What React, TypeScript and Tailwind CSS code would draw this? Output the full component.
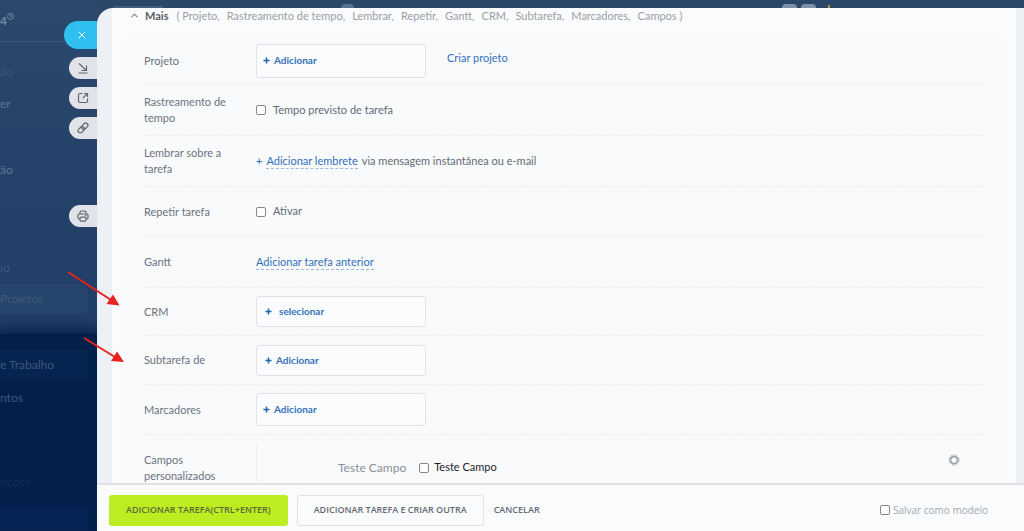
import React from "react";
import { ChevronUp, X } from "lucide-react";

const sections = [
  "( Projeto,",
  "Rastreamento de tempo,",
  "Lembrar,",
  "Repetir,",
  "Gantt,",
  "CRM,",
  "Subtarefa,",
  "Marcadores,",
  "Campos )",
];

function Row({
  label,
  className,
  children,
}: {
  label: string;
  className: string;
  children: React.ReactNode;
}) {
  return (
    <div className={"flex items-center border-b border-dashed border-[#eaecef] " + className}>
      <div className="w-28 shrink-0 pr-4 leading-4 text-[#6c737f]">{label}</div>
      <div className="flex min-w-0 flex-1 items-center">{children}</div>
    </div>
  );
}

function Plus() {
  return (
    <svg viewBox="0 0 8 8" className="size-[7px] shrink-0" aria-hidden="true">
      <path d="M4 0.5V7.5M0.5 4H7.5" stroke="#2067b0" strokeWidth="1.8" />
    </svg>
  );
}

function AddBox({ text, className }: { text: string; className: string }) {
  return (
    <button
      className={
        "flex w-[170px] items-center rounded-[3px] border border-[#dfe2e7] bg-[#fbfcfe] text-[10px] font-bold text-[#3473b9] " +
        className
      }
    >
      <Plus />
      {text}
    </button>
  );
}

function CheckBox({ id, label, className }: { id: string; label: string; className: string }) {
  return (
    <label htmlFor={id} className={"flex items-center " + className}>
      <input
        id={id}
        type="checkbox"
        className="size-[10px] shrink-0 appearance-none rounded-[2px] border border-[#85878b] bg-white"
      />
      {label}
    </label>
  );
}

function Sidebar() {
  return (
    <aside className="relative w-[97px] shrink-0 bg-linear-to-b from-[#2b496d] from-0% via-[#203e67] via-60% to-[#1d3a63] to-100%">
      <div className="flex h-full flex-col overflow-hidden text-[12px]">
        <div className="flex h-[42px] shrink-0 items-center border-b border-[#35597a]">
          <span className="text-[12px] font-bold text-[#7489a3]">4</span>
          <svg viewBox="0 0 10 10" className="mb-2 size-[7px]" fill="none" stroke="#8496ad" aria-hidden="true">
            <circle cx="5" cy="5" r="4.2" strokeWidth="1.2" />
            <path d="M5 2.5V5H7" strokeWidth="1.2" />
          </svg>
        </div>
        <ul className="shrink-0 pt-[14px] text-[#5f7490]">
          <li className="h-8 leading-8 text-[#3b5675]">ão</li>
          <li className="h-8 leading-8">er</li>
          <li className="mt-[34px] h-8 leading-8">ão</li>
        </ul>
        <ul className="shrink-0 pt-[66px] text-[#405a7b]">
          <li className="h-8 leading-8">io</li>
          <li className="mr-[9px] h-[30px] rounded-r-lg bg-[#26456c] leading-[30px]">Projetos</li>
        </ul>
        <div className="mt-5 flex-1 bg-[#02204a] shadow-[0_0_12px_4px_#02204a]">
          <ul className="pt-4 text-[#40567a]">
            <li className="mr-[9px] h-[30px] rounded-br-lg bg-[#05244f] leading-[30px]">e Trabalho</li>
            <li className="mt-0.5 h-8 leading-8">ntos</li>
            <li className="mt-[52px] h-8 leading-8 text-[#152f58]">nções</li>
          </ul>
          <div className="mr-[9px] mt-2 h-6 rounded-tr-lg bg-[#052354]"></div>
        </div>
      </div>

      <div className="absolute right-0 top-[21px] flex flex-col items-end gap-2 text-[#60656e]">
        <button aria-label="Fechar" className="flex h-7 w-[33px] items-center rounded-l-full bg-[#2fc0f0] pl-3 text-white">
          <X size={12} strokeWidth={2} />
        </button>
        <button aria-label="Recolher" className="flex h-[22px] w-7 items-center rounded-l-full bg-[#e1e3e8] pl-2">
          <svg viewBox="0 0 12 12" className="size-3" fill="none" stroke="currentColor" strokeWidth="1.2" aria-hidden="true">
            <path d="M2 1.5L9.5 8.5M9.5 3.5V8.5H4.5M1.5 11H10.5" />
          </svg>
        </button>
        <button aria-label="Abrir em nova janela" className="flex h-[22px] w-7 items-center rounded-l-full bg-[#e1e3e8] pl-2">
          <svg viewBox="0 0 12 12" className="size-3" fill="none" stroke="currentColor" strokeWidth="1.2" aria-hidden="true">
            <path d="M5.5 1.5H3Q1.5 1.5 1.5 3V9Q1.5 10.5 3 10.5H9Q10.5 10.5 10.5 9V6.5M7 1.5H10.5V5M10.5 1.5L5.8 6.2" />
          </svg>
        </button>
        <button aria-label="Copiar link" className="flex h-[22px] w-7 items-center rounded-l-full bg-[#e1e3e8] pl-2">
          <svg viewBox="0 0 12 12" className="size-3" fill="none" stroke="currentColor" strokeWidth="1.2" aria-hidden="true">
            <g transform="rotate(-45 6 6)">
              <rect x="0" y="3.8" width="7" height="4.4" rx="2.2" />
              <rect x="5" y="3.8" width="7" height="4.4" rx="2.2" />
            </g>
          </svg>
        </button>
        <button aria-label="Imprimir" className="mt-[58px] flex h-[22px] w-7 items-center rounded-l-full bg-[#e1e3e8] pl-2">
          <svg viewBox="0 0 12 12" className="size-3" fill="none" stroke="currentColor" strokeWidth="1.2" aria-hidden="true">
            <path d="M3 4V2.2Q3 1 4.2 1H7.8Q9 1 9 2.2V4" />
            <path d="M3 9H2.2Q1 9 1 7.8V5.2Q1 4 2.2 4H9.8Q11 4 11 5.2V7.8Q11 9 9.8 9H9" />
            <rect x="3" y="7.2" width="6" height="4" rx="1.2" />
            <path d="M8 5.7H9.4" />
          </svg>
        </button>
      </div>
    </aside>
  );
}

function TopBar() {
  return (
    <div className="flex h-2 shrink-0 items-end overflow-hidden bg-[#2b4769]">
      <div className="ml-4 h-0.5 w-[50px] rounded-t-full bg-[#47607f]"></div>
      <div className="ml-[178px] h-1 w-[13px] rounded-t-sm bg-[#5a7190]"></div>
      <div className="ml-auto mr-[194px] flex items-end gap-1">
        <div className="h-1 w-[15px] rounded-t-full bg-[#8190aa]"></div>
        <div className="h-1 w-[15px] rounded-t-full bg-[#8190aa]"></div>
        <div className="ml-2 h-[3px] w-0.5 bg-[#a89a4a]"></div>
      </div>
    </div>
  );
}

function App() {
  return (
    <div className="relative flex h-screen overflow-hidden bg-[#2b4769] font-[Lato,'Open_Sans',sans-serif] text-[11px] text-[#646a75]">
      <Sidebar />

      <main className="flex min-w-0 flex-1 flex-col">
        <TopBar />
        <div className="min-h-0 flex-1 overflow-hidden rounded-tl-2xl bg-[#edf1f5] pl-[15px] pr-2">
          <div className="h-full bg-[#fafbfd] px-[13px]">
            <div className="flex h-[29px] items-start pl-1 leading-4 text-[#9a9ea6]">
              <ChevronUp size={11} strokeWidth={2.5} className="mr-[5px] mt-0.5 text-[#82868e]" />
              <h2 className="mr-2 font-bold text-[#5a606b]">Mais</h2>
              <div className="flex gap-[7px] whitespace-nowrap">
                {sections.map((name) => (
                  <span key={name}>{name}</span>
                ))}
              </div>
            </div>

            <div className="bg-[#f9fafc] px-[19px]">
              <Row label="Projeto" className="h-12">
                <AddBox text="Adicionar" className="h-[34px] gap-1 pl-1.5" />
                <a href="#" className="mb-1 ml-[21px] text-[#3271b8]">
                  Criar projeto
                </a>
              </Row>
              <Row label="Rastreamento de tempo" className="h-[51px]">
                <CheckBox id="tempo" label="Tempo previsto de tarefa" className="gap-[7px]" />
              </Row>
              <Row label="Lembrar sobre a tarefa" className="h-[51px]">
                <span className="mr-1 text-[#3271b8]">+</span>
                <a href="#" className="mr-1 border-b border-dashed border-[#9dbbd9] leading-[14px] text-[#3271b8]">
                  Adicionar lembrete
                </a>
                via mensagem instantânea ou e-mail
              </Row>
              <Row label="Repetir tarefa" className="h-[50px]">
                <CheckBox id="repetir" label="Ativar" className="gap-[7px]" />
              </Row>
              <Row label="Gantt" className="h-[51px]">
                <a href="#" className="border-b border-dashed border-[#9dbbd9] leading-[14px] text-[#3271b8]">
                  Adicionar tarefa anterior
                </a>
              </Row>
              <Row label="CRM" className="h-12">
                <AddBox text="selecionar" className="h-[31px] gap-[7px] pl-2" />
              </Row>
              <Row label="Subtarefa de" className="h-[49px]">
                <AddBox text="Adicionar" className="h-[31px] gap-1 pl-2" />
              </Row>
              <Row label="Marcadores" className="h-[50px]">
                <AddBox text="Adicionar" className="h-[33px] gap-1 pl-1.5" />
              </Row>
              <Row label="Campos personalizados" className="h-[66px]">
                <div className="flex h-12 flex-1 items-center border-l border-[#eceef1]">
                  <span className="ml-[81px] mr-[13px] text-[12px] text-[#8a909a]">Teste Campo</span>
                  <CheckBox id="campo" label="Teste Campo" className="gap-[5px] text-[#1f2226]" />
                  <button aria-label="Configurar campos" className="mb-4 ml-auto mr-6">
                    <svg viewBox="0 0 12 12" className="size-3" fill="none" stroke="#a1a5ad" aria-hidden="true">
                      <circle cx="6" cy="6" r="3.6" strokeWidth="2" />
                      <circle cx="6" cy="6" r="5.1" strokeWidth="1" strokeDasharray="2 2" />
                    </svg>
                  </button>
                </div>
              </Row>
            </div>
          </div>
        </div>

        <footer className="flex h-12 shrink-0 items-center border-t-2 border-[#e2e2e6] bg-[#fafbfd] pl-3 pr-9 pt-1 font-['Open_Sans',sans-serif] text-[9px] font-semibold">
          <button className="mr-[9px] h-[31px] rounded-[3px] bg-[#bbed21] px-[17px] text-[#5b6b3d]">
            ADICIONAR TAREFA(CTRL+ENTER)
          </button>
          <button className="mr-[10px] h-[31px] rounded-[3px] border border-[#e0e2e6] px-4">
            ADICIONAR TAREFA E CRIAR OUTRA
          </button>
          <button>CANCELAR</button>
          <CheckBox id="modelo" label="Salvar como modelo" className="ml-auto gap-[3px] text-[10px] font-normal text-[#a3a7ae]" />
        </footer>
      </main>

      {/* arrows pointing at the CRM and Subtarefa rows */}
      <svg
        viewBox="0 0 60 96"
        className="pointer-events-none absolute left-[66px] top-[268px] h-24 w-[60px]"
        aria-hidden="true"
      >
        <path d="M2 4L45 32M18 70L49 89" stroke="#e52320" strokeWidth="2" />
        <path d="M53.500 37.500L40.500 36L47 26.500ZM58 94L45 93L51 83.500Z" fill="#e52320" />
      </svg>
    </div>
  );
}

export default App;
